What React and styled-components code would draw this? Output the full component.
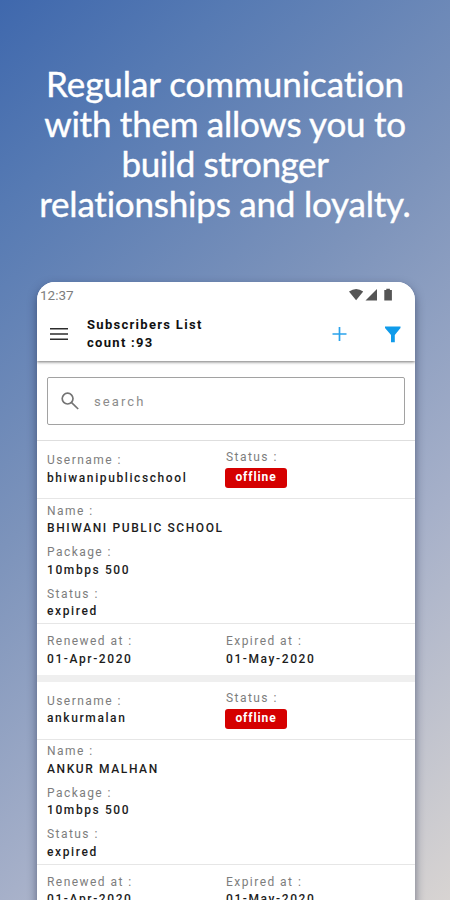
import React from "react";
import styled, { createGlobalStyle } from "styled-components";

const GlobalStyle = createGlobalStyle`
  * { box-sizing: border-box; }
  body { margin: 0; }
`;

const Page = styled.main`
  display: flex;
  flex-direction: column;
  align-items: center;
  width: 450px;
  height: 900px;
  overflow: hidden;
  background: linear-gradient(138deg, #3f68ad 0%, #567ab3 16%, #7c93bb 42%, #a6b0c9 69%, #d8d4d2 100%);
  font-family: Roboto, "Liberation Sans", sans-serif;
`;

const Headline = styled.h1`
  display: flex;
  flex: none;
  flex-direction: column;
  align-items: center;
  height: 282px;
  margin: 0;
  padding-top: 63px;
  color: #fff;
  font: 400 35px/40px Lato, "Open Sans", sans-serif;
  white-space: nowrap;
  -webkit-text-stroke: 0.4px #fff;
`;

const HeadlineRow = styled.span`
  letter-spacing: ${(p) => p.$spacing}px;
`;

const Phone = styled.section`
  display: flex;
  flex-direction: column;
  flex: none;
  width: 378px;
  height: 640px;
  margin-left: 2px;
  overflow: hidden;
  border-radius: 18px 18px 0 0;
  background: #fff;
  box-shadow: 0 4px 10px rgba(25, 35, 65, 0.55);
`;

const StatusBar = styled.div`
  display: flex;
  align-items: center;
  justify-content: space-between;
  position: relative;
  z-index: 1;
  flex: none;
  height: 25px;
  padding: 0 22px 0 3px;
  background: #fff;
  color: #7d7d7d;
  font-size: 13.5px;
`;

const StatusIcons = styled.div`
  display: flex;
  align-items: center;
`;

const AppBar = styled.header`
  display: flex;
  align-items: center;
  flex: none;
  height: 54px;
  padding: 0 13px;
  box-shadow: 0 1px 3px rgba(0, 0, 0, 0.55);
`;

const AppTitle = styled.h2`
  flex: 1;
  margin: 0 0 0 18px;
  color: #111;
  font-size: 13px;
  font-weight: 700;
  line-height: 18px;
  letter-spacing: 1.3px;
`;

const Actions = styled.div`
  display: flex;
  align-items: center;
  gap: 37px;
`;

const SearchArea = styled.div`
  flex: none;
  height: 80px;
  padding: 16px 10px 0;
  border-bottom: 1px solid #dedede;
`;

const SearchBox = styled.div`
  display: flex;
  align-items: center;
  gap: 13px;
  height: 48px;
  padding-left: 11px;
  border: 1px solid #a2a2a2;
  border-radius: 2px;
  color: #8c8c8c;
  font-size: 13px;
  letter-spacing: 2.1px;
`;

const Record = styled.article`
  flex: none;
  border-bottom: 7px solid #efefef;
`;

const SplitRow = styled.div`
  display: grid;
  grid-template-columns: 179px 1fr;
  height: ${(p) => p.$height}px;
  padding: ${(p) => p.$top}px 10px 0;
  border-bottom: ${(p) => (p.$divided ? "1px solid #e6e6e6" : "none")};
`;

const Details = styled.div`
  display: flex;
  flex-direction: column;
  gap: 6.5px;
  height: 125px;
  padding: 3.6px 10px 0;
  border-bottom: 1px solid #e6e6e6;
`;

const FieldBox = styled.div`
  display: flex;
  flex-direction: column;
  align-items: flex-start;
  margin-top: ${(p) => p.$shift || 0}px;
  white-space: nowrap;
  font-size: 12px;
  line-height: 17.5px;
`;

const Label = styled.span`
  color: #7d7d7d;
  letter-spacing: 1.45px;
`;

const Value = styled.span`
  color: #1c1c1c;
  font-weight: 500;
  letter-spacing: 1.6px;
`;

const Badge = styled.span`
  display: flex;
  align-items: center;
  justify-content: center;
  width: 62px;
  height: 20px;
  margin: 1.5px 0 0 -1px;
  border-radius: 3px;
  background: #d50000;
  color: #fff;
  font-weight: 700;
  letter-spacing: 0.9px;
`;

const Field = ({ label, value }) => (
  <FieldBox>
    <Label>{label} :</Label>
    <Value>{value}</Value>
  </FieldBox>
);

const headline = [
  ["Regular communication", -0.06],
  ["with them allows you to", -0.26],
  ["build stronger", -0.4],
  ["relationships and loyalty.", -0.22],
];

const subscribers = [
  { username: "bhiwanipublicschool", name: "BHIWANI PUBLIC SCHOOL" },
  { username: "ankurmalan", name: "ANKUR MALHAN" },
];

const Subscriber = ({ username, name }) => (
  <Record>
    <SplitRow $height={58} $top={11.2} $divided>
      <Field label="Username" value={username} />
      <FieldBox $shift={-3.2}>
        <Label>Status :</Label>
        <Badge>offline</Badge>
      </FieldBox>
    </SplitRow>
    <Details>
      <Field label="Name" value={name} />
      <Field label="Package" value="10mbps 500" />
      <Field label="Status" value="expired" />
    </Details>
    <SplitRow $height={50.5} $top={9.2}>
      <Field label="Renewed at" value="01-Apr-2020" />
      <Field label="Expired at" value="01-May-2020" />
    </SplitRow>
  </Record>
);

export default function App() {
  return (
    <Page>
      <GlobalStyle />
      <Headline>
        {headline.map(([text, spacing]) => (
          <HeadlineRow key={text} $spacing={spacing}>{text}</HeadlineRow>
        ))}
      </Headline>
      <Phone>
        <StatusBar>
          <span>12:37</span>
          <StatusIcons>
            <svg width="44" height="14" viewBox="0 0 44 14" fill="#555">
              <path d="M0 3.6Q7.3-1.4 14.2 3.6L7.1 12.3Z" />
              <path d="M16.5 12.5L28 1V12.5Z" />
              <path d="M35.3 2h2V.7h3.6V2h2v10.6h-7.6Z" />
            </svg>
          </StatusIcons>
        </StatusBar>
        <AppBar>
          <svg width="19" height="14" viewBox="0 0 19 14" stroke="#2c2c2c" strokeWidth="1.6">
            <path d="M0 1.8h18M0 7h18M0 12.2h18" />
          </svg>
          <AppTitle>Subscribers List<br />count :93</AppTitle>
          <Actions>
            <svg width="16" height="16" viewBox="0 0 16 16" stroke="#2aa3ec" strokeWidth="1.7">
              <path d="M.5 8h14M7.5 1v14" />
            </svg>
            <svg width="17" height="17" viewBox="0 0 17 17" fill="#109bea">
              <path d="M0 .5h15.5v1.4L9.8 9v7.3H6V9L0 1.9Z" />
            </svg>
          </Actions>
        </AppBar>
        <SearchArea>
          <SearchBox>
            <svg width="22" height="22" viewBox="0 0 22 22" fill="none" stroke="#747474" strokeWidth="1.7">
              <circle cx="8.6" cy="8.6" r="5.4" />
              <path d="M12.6 12.6l6.6 6.4" />
            </svg>
            <span>search</span>
          </SearchBox>
        </SearchArea>
        {subscribers.map((s) => <Subscriber key={s.username} {...s} />)}
      </Phone>
    </Page>
  );
}
